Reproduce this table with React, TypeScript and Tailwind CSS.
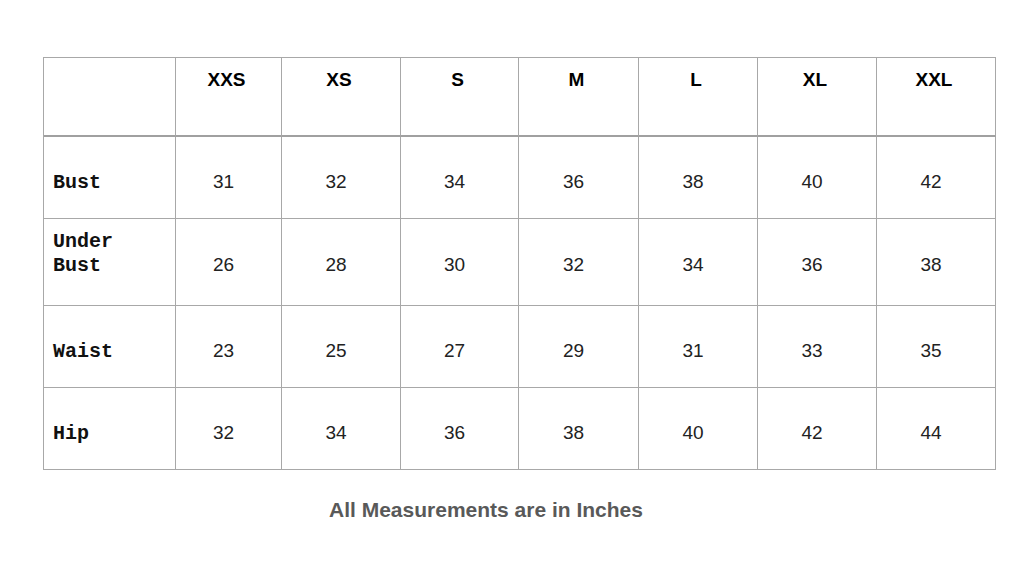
const sizes = ["XXS", "XS", "S", "M", "L", "XL", "XXL"];

const rows: { label: string[]; values: number[]; height: string; pad: string }[] = [
  { label: ["Bust"], values: [31, 32, 34, 36, 38, 40, 42], height: "h-[82px]", pad: "pt-[10px]" },
  { label: ["Under", "Bust"], values: [26, 28, 30, 32, 34, 36, 38], height: "h-[87px]", pad: "pt-[6px]" },
  { label: ["Waist"], values: [23, 25, 27, 29, 31, 33, 35], height: "h-[82px]", pad: "pt-[10px]" },
  { label: ["Hip"], values: [32, 34, 36, 38, 40, 42, 44], height: "h-[82px]", pad: "pt-[10px]" },
];

const cols = "grid grid-cols-[132px_106px_119px_118px_120px_119px_119px_119px]";

export default function App() {
  return (
    <div className="h-[576px] w-[1024px] bg-white pt-[57px] font-['Liberation_Sans',Arial,sans-serif]">
      <div className="ml-[43px] w-[953px] border-l border-t border-[#a8a8a8]">
        {/* header */}
        <div className={cols}>
          <div className="h-[79px] border-b-2 border-r border-[#a0a0a0] border-r-[#a8a8a8]" />
          {sizes.map((s) => (
            <div
              key={s}
              className="h-[79px] border-b-2 border-r border-[#a0a0a0] border-r-[#a8a8a8] pr-[4px] pt-[8px] text-center text-[19px] font-bold text-black"
            >
              {s}
            </div>
          ))}
        </div>

        {rows.map((row) => (
          <div key={row.label.join(" ")} className={cols}>
            <div
              className={`${row.height} flex items-center border-b border-r border-[#a8a8a8] pl-[9px] font-['Liberation_Mono','Courier_New',monospace] text-[20px] leading-[24px] font-bold text-[#111] ${
                row.label.length > 1 ? "pb-[17px]" : "pt-[10px]"
              }`}
            >
              <div>
                {row.label.map((l) => (
                  <div key={l}>{l}</div>
                ))}
              </div>
            </div>
            {row.values.map((v, i) => (
              <div
                key={i}
                className={`${row.height} ${row.pad} flex items-center justify-center border-b border-r border-[#a8a8a8] pr-[10px] text-[19px] text-[#222]`}
              >
                {v}
              </div>
            ))}
          </div>
        ))}
      </div>

      <p className="mt-[24px] pl-[329px] text-[21px] font-bold text-[#595959]">
        All Measurements are in Inches
      </p>
    </div>
  );
}
